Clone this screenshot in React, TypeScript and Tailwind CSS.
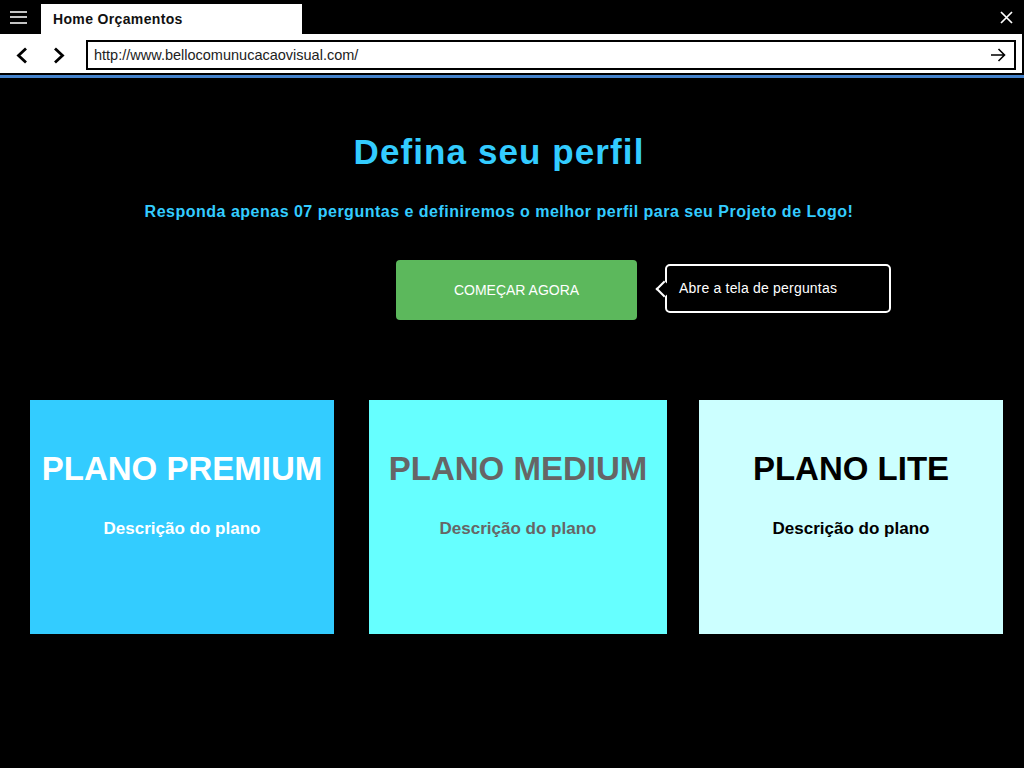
import React from "react";

const plans = [
  { name: "PLANO PREMIUM", bg: "bg-[#33ccff]", text: "text-white", w: "w-[304px]" },
  { name: "PLANO MEDIUM", bg: "bg-[#66ffff]", text: "text-[#666666]", w: "w-[298px]" },
  { name: "PLANO LITE", bg: "bg-[#ccffff]", text: "text-black", w: "w-[304px]" },
];

export default function App() {
  return (
    <div
      className="w-[1024px] h-[768px] bg-black flex flex-col overflow-hidden"
      style={{ fontFamily: '"Liberation Sans", Arial, sans-serif' }}
    >
      {/* Title bar */}
      <div className="h-[34px] flex items-end shrink-0">
        <div className="w-[41px] h-[34px] flex flex-col justify-center items-start pl-[10px] gap-[3.5px]">
          <span className="block h-[2px] w-[17px] bg-[#c4c4c4]" />
          <span className="block h-[2px] w-[17px] bg-[#c4c4c4]" />
          <span className="block h-[2px] w-[17px] bg-[#c4c4c4]" />
        </div>
        <div className="w-[261px] h-[30px] bg-white pl-[12px] flex items-center">
          <span className="text-[14px] font-bold tracking-[0.35px] text-[#111]">Home Orçamentos</span>
        </div>
        <div className="flex-1" />
        <div className="h-[34px] flex items-center pr-[11px]">
          <svg width="13" height="13" viewBox="0 0 13 13">
            <path d="M1 1 L12 12 M12 1 L1 12" stroke="white" strokeWidth="1.7" fill="none" />
          </svg>
        </div>
      </div>

      {/* Address bar */}
      <div className="h-[39px] flex shrink-0">
        <div className="w-[1022px] bg-white flex items-start pt-[6px]">
          <div className="w-[86px] h-[30px] flex items-center">
            <svg width="12" height="17" viewBox="0 0 12 17" className="ml-[16px]">
              <path d="M10 1.5 L2.5 8.5 L10 15.5" stroke="black" strokeWidth="2.8" fill="none" strokeLinejoin="miter" />
            </svg>
            <svg width="12" height="17" viewBox="0 0 12 17" className="ml-[25px]">
              <path d="M2 1.5 L9.5 8.5 L2 15.5" stroke="black" strokeWidth="2.8" fill="none" strokeLinejoin="miter" />
            </svg>
          </div>
          <div className="w-[930px] h-[30px] border-2 border-black flex items-center pl-[6px] pr-[8px]">
            <span className="text-[14.5px] text-[#222] mt-[1px]">http://www.bellocomunucacaovisual.com/</span>
            <div className="flex-1" />
            <svg width="16" height="14" viewBox="0 0 16 14">
              <path d="M1 7 H14.5 M8.5 1 L14.5 7 L8.5 13" stroke="black" strokeWidth="1.6" fill="none" />
            </svg>
          </div>
        </div>
      </div>
      <div className="h-[2px] bg-black shrink-0" />
      <div className="h-[3px] bg-[#4583cc] shrink-0" />

      {/* Content */}
      <div className="flex-1 flex flex-col pt-[54px]">
        <div className="w-[998px] text-center">
          <h1 className="text-[35px] leading-[40px] font-bold tracking-[1.1px] text-[#33ccff]">Defina seu perfil</h1>
        </div>
        <div className="w-[998px] text-center mt-[30px]">
          <p className="text-[16px] leading-[20px] font-bold tracking-[0.5px] text-[#33ccff]">
            Responda apenas 07 perguntas e definiremos o melhor perfil para seu Projeto de Logo!
          </p>
        </div>

        <div className="flex items-start mt-[38px] pl-[396px]">
          <button className="w-[241px] h-[60px] bg-[#5cb85c] rounded-[4px] text-white text-[14px] flex items-center justify-center">
            COMEÇAR AGORA
          </button>
          <div className="relative ml-[28px] mt-[4px] w-[226px] h-[49px] border-2 border-white rounded-[5px] flex items-center pl-[12px]">
            <div className="absolute left-[-9px] top-1/2 -mt-[6px] w-[12px] h-[12px] bg-black border-l-2 border-b-2 border-white rotate-45" />
            <span className="relative text-white text-[14px] tracking-[0.2px]">Abre a tela de perguntas</span>
          </div>
        </div>

        <div className="flex mt-[80px] pl-[30px]">
          {plans.map((p, i) => (
            <div
              key={p.name}
              className={`${p.w} h-[234px] ${p.bg} ${p.text} flex flex-col items-center pt-[52px] ${i === 1 ? "ml-[35px]" : i === 2 ? "ml-[32px]" : ""}`}
            >
              <div className="text-[33px] leading-[33px] font-bold">{p.name}</div>
              <div className="mt-[34px] text-[17px] leading-[20px] font-bold">Descrição do plano</div>
            </div>
          ))}
        </div>
      </div>
    </div>
  );
}
